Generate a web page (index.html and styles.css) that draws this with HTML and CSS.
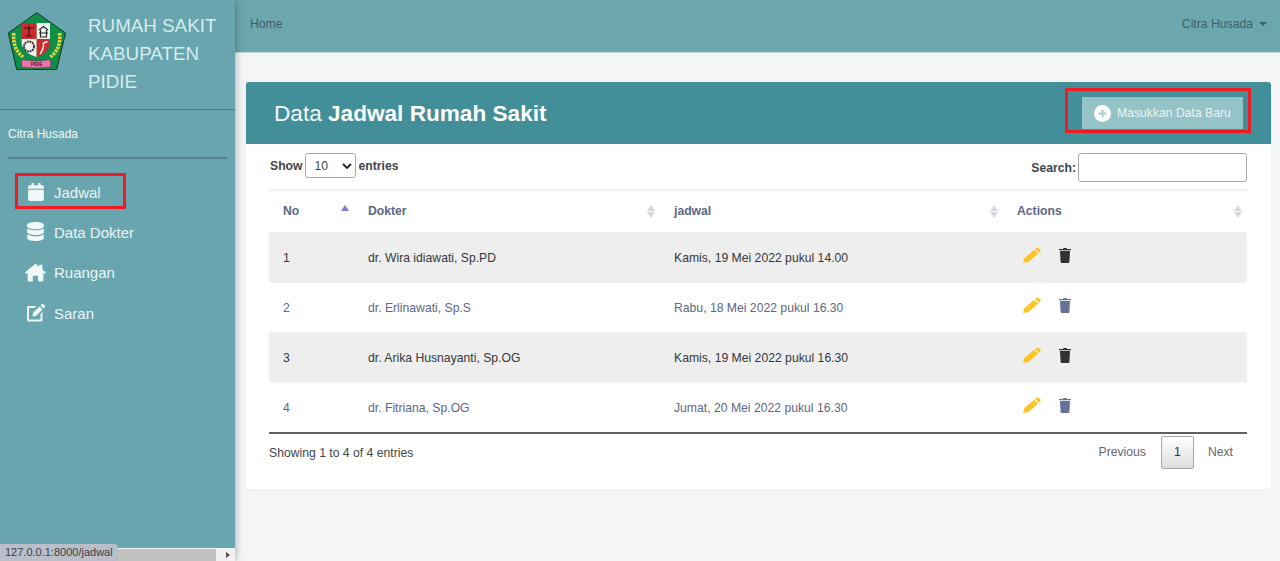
FILE: index.html
```html
<!DOCTYPE html>
<html>
<head>
<meta charset="utf-8">
<title>Data Jadwal Rumah Sakit</title>
<link rel="stylesheet" href="styles.css">
</head>
<body>
<svg class="icon-defs" width="0" height="0">
  <symbol id="i-calendar" viewBox="0 0 448 512"><path d="M12 192h424c6.6 0 12 5.4 12 12v260c0 26.5-21.5 48-48 48H48c-26.5 0-48-21.5-48-48V204c0-6.6 5.4-12 12-12zm436-44v-36c0-26.5-21.5-48-48-48h-48V12c0-6.6-5.4-12-12-12h-40c-6.6 0-12 5.4-12 12v52H160V12c0-6.6-5.4-12-12-12h-40c-6.6 0-12 5.4-12 12v52H48C21.5 64 0 85.5 0 112v36c0 6.6 5.4 12 12 12h424c6.6 0 12-5.4 12-12z"/></symbol>
  <symbol id="i-database" viewBox="0 0 448 512"><path d="M448 73.143v45.714C448 159.143 347.667 192 224 192S0 159.143 0 118.857V73.143C0 32.857 100.333 0 224 0s224 32.857 224 73.143zM448 176v102.857C448 319.143 347.667 352 224 352S0 319.143 0 278.857V176c48.125 33.143 136.208 48.572 224 48.572S399.874 209.143 448 176zm0 160v102.857C448 479.143 347.667 512 224 512S0 479.143 0 438.857V336c48.125 33.143 136.208 48.572 224 48.572S399.874 369.143 448 336z"/></symbol>
  <symbol id="i-home" viewBox="0 0 20 17"><path d="M10 0L13.500 3V1H16.500V5.600L20 8.600L18.800 10L17.500 9V16Q17.500 17 16.500 17H12.500V11.500H7.500V17H3.500Q2.500 17 2.500 16V9L1.200 10L0 8.600Z"/></symbol>
  <symbol id="i-edit" viewBox="0 0 19 19"><path d="M2.500 3H10.500L8.500 5H3V16.500H14.500V11L16.500 9V17Q16.500 18.500 15 18.500H2.500Q1 18.500 1 17V4.500Q1 3 2.500 3Z"/><path d="M7 10L13.500 3.500L16.500 6.500L10 13L6.500 13.500Z"/><path d="M14.500 2.500L15.800 1.200Q16.600 .6 17.400 1.200L18.800 2.600Q19.300 3.400 18.700 4.200L17.500 5.500Z"/></symbol>
  <symbol id="i-pencil" viewBox="0 0 18 16"><path d="M0 16L1.300 11.300L11 2.800L15.200 6.500L5.400 15Z"/><path d="M12 2L13.200 .8Q14.300 0 15.400 .8L17.400 2.600Q18 3.500 17.200 4.500L16 5.700Z"/></symbol>
  <symbol id="i-trash" viewBox="0 0 12 16"><path d="M0 2H4L4.500 1H7.500L8 2H12V3.200H0Z"/><path d="M1 4H11L10.400 15Q10.300 16 9.400 16H2.600Q1.700 16 1.600 15Z"/></symbol>
  <symbol id="i-plus" viewBox="0 0 17 17"><circle cx="8.500" cy="8.500" r="8.500" fill="#fff"/><path d="M8.500 4.500V12.500M4.500 8.500H12.500" stroke="#a9cfd2" stroke-width="2" fill="none"/></symbol>
</svg>

<div class="wrapper">
  <aside class="sidebar">
    <div class="brand">
      <svg class="brand-logo" viewBox="0 0 58 58">
        <polygon points="28.700,.7 57.500,21 48.700,57.500 8.700,57.500 .3,21" fill="#0c8f47" stroke="#10342a"/>
        <path d="M6 21 Q4 36 15 45 M51.500 21 Q53.500 36 42.500 45" fill="none" stroke="#e6d43c" stroke-width="3.500" stroke-dasharray="2.500 1"/>
        <path d="M13.700 11 H28.700 V27 H13.700 Z" fill="#cf2a2e"/>
        <path d="M28.700 11 H42 V27 H28.700 Z" fill="#f2f2ee"/>
        <path d="M13.700 27 H28.700 V45 Q17 42 13.700 33 Z" fill="#f2f2ee"/>
        <path d="M28.700 27 H42 V33 Q39 42 28.700 45 Z" fill="#cf2a2e"/>
        <path d="M16 16 H26 M21 13.500 V24 M17.500 24 H24.500" stroke="#2a1a1a" stroke-width="1.200" fill="none"/>
        <path d="M31 18 L35.500 14.500 L40 18 M32.500 18 V25 H38.500 V18 M31 21 H40" stroke="#2b2b2b" stroke-width="1.200" fill="none"/>
        <circle cx="21" cy="34.500" r="5" fill="#f2f2ee" stroke="#3c3c3c" stroke-width="2" stroke-dasharray="2 .6"/>
        <path d="M32 42 Q36 37 35.500 31 L39.500 29.500" stroke="#f2f2ee" stroke-width="1.500" fill="none"/>
        <path d="M14 47.500 Q28.700 50.500 42 47.500 L43 55 Q28.700 57 13.500 55 Z" fill="#ea74ac" stroke="#7d2a55" stroke-width=".6"/>
        <text class="logo-text" x="28.700" y="54" text-anchor="middle">PIDIE</text>
      </svg>
      <div class="brand-text">RUMAH SAKIT KABUPATEN PIDIE</div>
    </div>
    <div class="user-panel">Citra Husada</div>
    <ul class="nav">
      <li class="nav-active"><svg class="nav-icon ic-cal"><use href="#i-calendar"/></svg>Jadwal</li>
      <li><svg class="nav-icon ic-db"><use href="#i-database"/></svg>Data Dokter</li>
      <li><svg class="nav-icon ic-home"><use href="#i-home"/></svg>Ruangan</li>
      <li><svg class="nav-icon ic-edit"><use href="#i-edit"/></svg>Saran</li>
    </ul>
    <div class="side-scroll">
      <span class="side-thumb"></span>
      <span class="side-arrow"></span>
    </div>
  </aside>

  <div class="main">
    <nav class="topbar">
      <span>Home</span>
      <span class="top-user">Citra Husada<i class="caret"></i></span>
    </nav>
    <div class="content">
      <section class="card">
        <header class="card-head">
          <h1>Data <b>Jadwal Rumah Sakit</b></h1>
          <div class="btn-mark">
            <a class="btn-new"><svg class="btn-icon"><use href="#i-plus"/></svg>Masukkan Data Baru</a>
          </div>
        </header>
        <div class="card-body">
          <div class="dt-top">
            <label class="dt-len">Show <span class="fake-select">10<svg viewBox="0 0 10 6"><path d="M1 1l4 4 4-4" fill="none" stroke="#222" stroke-width="1.800"/></svg></span> entries</label>
            <label class="dt-search">Search: <span class="fake-input"></span></label>
          </div>
          <table class="dt">
            <colgroup><col class="c1"><col class="c2"><col class="c3"><col class="c4"></colgroup>
            <thead>
              <tr>
                <th class="sort-asc">No</th>
                <th>Dokter</th>
                <th>jadwal</th>
                <th>Actions</th>
              </tr>
            </thead>
            <tbody>
              <tr class="odd">
                <td>1</td><td>dr. Wira idiawati, Sp.PD</td><td>Kamis, 19 Mei 2022 pukul 14.00</td>
                <td><span class="acts"><svg class="a-edit"><use href="#i-pencil"/></svg><svg class="a-del"><use href="#i-trash"/></svg></span></td>
              </tr>
              <tr>
                <td>2</td><td>dr. Erlinawati, Sp.S</td><td>Rabu, 18 Mei 2022 pukul 16.30</td>
                <td><span class="acts"><svg class="a-edit"><use href="#i-pencil"/></svg><svg class="a-del"><use href="#i-trash"/></svg></span></td>
              </tr>
              <tr class="odd">
                <td>3</td><td>dr. Arika Husnayanti, Sp.OG</td><td>Kamis, 19 Mei 2022 pukul 16.30</td>
                <td><span class="acts"><svg class="a-edit"><use href="#i-pencil"/></svg><svg class="a-del"><use href="#i-trash"/></svg></span></td>
              </tr>
              <tr>
                <td>4</td><td>dr. Fitriana, Sp.OG</td><td>Jumat, 20 Mei 2022 pukul 16.30</td>
                <td><span class="acts"><svg class="a-edit"><use href="#i-pencil"/></svg><svg class="a-del"><use href="#i-trash"/></svg></span></td>
              </tr>
            </tbody>
          </table>
          <div class="dt-foot">
            <span class="dt-info">Showing 1 to 4 of 4 entries</span>
            <span class="pager"><a>Previous</a><a class="page-on">1</a><a>Next</a></span>
          </div>
        </div>
      </section>
    </div>
  </div>
</div>
<div class="status-bubble">127.0.0.1:8000/jadwal</div>
</body>
</html>
```
FILE: styles.css
```css
* {
  box-sizing: border-box;
}

html, body {
  height: 100%;
}

body {
  margin: 0;
  overflow: hidden;
  font-family: "Liberation Sans", Arial, sans-serif;
  font-size: 12.200px;
  color: #212529;
  background-color: #f4f5f7;
}

.icon-defs {
  position: absolute;
}

.wrapper {
  display: flex;
  height: 100%;
}

/* sidebar */
.sidebar {
  position: relative;
  flex: 0 0 235px;
  background-color: #69a5ae;
  box-shadow: 0 0 8px rgba(0, 0, 0, .35);
  z-index: 2;
}

.brand {
  display: flex;
  height: 110px;
  padding: 12px 0 0 8px;
  border-bottom: 1px solid #4f7a82;
}

.brand-logo {
  flex: 0 0 58px;
  width: 58px;
  height: 58px;
}

.logo-text {
  font-size: 4.500px;
  font-weight: bold;
  fill: #5a1238;
}

.brand-text {
  width: 140px;
  margin: .4px 0 0 22px;
  font-size: 18.800px;
  line-height: 28px;
  color: #d3ecef;
}

.user-panel {
  height: 49px;
  width: 219px;
  margin: 0 8px;
  padding-top: 17px;
  font-size: 12px;
  color: #f2f8f9;
  border-bottom: 2px solid #55848d;
}

.nav {
  list-style: none;
  margin: 13px 0 0;
  padding: 0;
}

.nav li {
  position: relative;
  display: flex;
  align-items: center;
  height: 40.400px;
  padding-left: 54px;
  font-size: 15px;
  color: #e9f4f5;
}

.nav-icon {
  position: absolute;
  fill: #f1f8f9;
}

.ic-cal {
  left: 28px;
  top: 11px;
  width: 16px;
  height: 18px;
}

.ic-db {
  left: 27px;
  top: 10px;
  width: 17px;
  height: 19px;
}

.ic-home {
  left: 25px;
  top: 10px;
  width: 21px;
  height: 19px;
}

.ic-edit {
  left: 26px;
  top: 10px;
  width: 19px;
  height: 19px;
}

.nav-active::after {
  content: "";
  position: absolute;
  left: 15px;
  top: 1px;
  width: 105px;
  height: 30px;
  border: 3px solid #ed1c24;
}

.side-scroll {
  position: absolute;
  left: 0;
  right: 0;
  bottom: 0;
  height: 13px;
  background-color: #f1f1f1;
}

.side-thumb {
  position: absolute;
  left: 0;
  right: 19px;
  top: 1px;
  bottom: 0;
  background-color: #c1c1c1;
}

.side-arrow {
  position: absolute;
  right: 5px;
  top: 4px;
  border-left: 4px solid #505050;
  border-top: 3.500px solid transparent;
  border-bottom: 3.500px solid transparent;
}

.status-bubble {
  position: fixed;
  left: 0;
  bottom: 0;
  width: 118px;
  height: 17px;
  padding: 2px 0 0 5px;
  font-size: 11px;
  color: #3c3f46;
  background-color: #b9bec9;
  border-top-right-radius: 4px;
  z-index: 5;
}

/* main column */
.main {
  flex: 1;
  min-width: 0;
}

.topbar {
  display: flex;
  justify-content: space-between;
  align-items: center;
  height: 53px;
  padding: 0 13px 5px 15px;
  color: #3f5f66;
  background-color: #6ca7af;
  border-bottom: 1px solid #c3d9dc;
}

.top-user {
  display: flex;
  align-items: center;
}

.caret {
  margin-left: 6px;
  border-top: 4px solid #3f5f66;
  border-left: 4px solid transparent;
  border-right: 4px solid transparent;
}

.content {
  padding: 29px 9px 0 11px;
}

.card {
  height: 407px;
  background-color: #fff;
  border-radius: 3px;
  box-shadow: 0 0 2px rgba(0, 0, 0, .07);
}

.card-head {
  display: flex;
  justify-content: space-between;
  align-items: center;
  height: 62px;
  padding: 0 28px;
  background-color: #438f99;
  border-radius: 3px 3px 0 0;
}

.card-head h1 {
  margin: 2px 0 0;
  font-size: 22.600px;
  font-weight: normal;
  color: #f1f8f9;
}

.card-head b {
  color: #fff;
}

.btn-mark {
  position: relative;
}

.btn-mark::after {
  content: "";
  position: absolute;
  left: -17px;
  right: -8px;
  top: -9px;
  bottom: -4px;
  border: 3px solid #ed1c24;
}

.btn-new {
  display: flex;
  align-items: center;
  width: 161px;
  height: 32px;
  padding-left: 12px;
  color: #e9f3f4;
  background-color: #95c4c8;
  border-radius: 1px;
}

.btn-icon {
  width: 17px;
  height: 17px;
  margin-right: 6px;
}

.card-body {
  padding: 9px 24px 0 23px;
}

.dt-top {
  display: flex;
  justify-content: space-between;
  height: 38px;
  border-bottom: 2px solid #f0f1f2;
}

.dt-len {
  display: flex;
  align-items: center;
  align-self: flex-start;
  height: 25px;
  gap: 3px;
  padding-left: 1px;
  font-weight: bold;
  color: #41464b;
}

.fake-select {
  display: flex;
  align-items: center;
  justify-content: space-between;
  width: 51px;
  height: 25px;
  margin-left: -1px;
  padding: 0 3px 0 9px;
  font-weight: normal;
  border: 1px solid #aaa;
  border-radius: 3px;
  background-color: #fff;
}

.fake-select svg {
  width: 10px;
  height: 6px;
}

.dt-search {
  display: flex;
  align-items: center;
  align-self: flex-start;
  height: 29px;
  gap: 2px;
  font-weight: bold;
  color: #41464b;
}

.fake-input {
  width: 169px;
  height: 29px;
  background-color: #fff;
  border: 1px solid #aaa;
  border-radius: 3px;
}

table.dt {
  width: 100%;
  table-layout: fixed;
  border-collapse: collapse;
}

.c1 { width: 85px; }
.c2 { width: 306px; }
.c3 { width: 343px; }
.c4 { width: 244px; }

.dt th {
  position: relative;
  height: 41px;
  padding: 0 14px 1px;
  text-align: left;
  font-weight: bold;
  color: #5e6784;
}

/* the pair of sort arrows on each header */
.dt th::before,
.dt th::after {
  content: "";
  position: absolute;
  right: 5px;
  border-left: 4px solid transparent;
  border-right: 4px solid transparent;
}

.dt th::before {
  top: 14px;
  border-bottom: 6px solid #d5d8dc;
}

.dt th::after {
  top: 21px;
  border-top: 6px solid #d5d8dc;
}

.dt th.sort-asc::before {
  border-bottom-color: #7c7fc9;
}

.dt th.sort-asc::after {
  display: none;
}

.dt td {
  height: 50px;
  padding: 1px 14px 0;
  color: #5e6784;
  border-top: 1px solid #f2f2f2;
}

.dt tr.odd td {
  color: #34383c;
  background-color: #eeeeee;
}

.dt tbody tr:last-child td {
  height: 51px;
  border-bottom: 2px solid #5f6265;
}

.acts {
  display: flex;
  align-items: center;
  gap: 18px;
  padding: 0 0 6px 6px;
}

.a-edit {
  width: 18px;
  height: 16px;
  fill: #fcc425;
}

.a-del {
  width: 12px;
  height: 16px;
  fill: #667394;
}

.odd .a-del {
  fill: #2f3336;
}

.dt-foot {
  display: flex;
  justify-content: space-between;
  align-items: center;
  padding-top: 2px;
}

.dt-info {
  color: #41464b;
}

.pager {
  display: flex;
  align-items: center;
  padding-right: 14px;
}

.pager a {
  line-height: 31px;
  color: #666;
}

.pager .page-on {
  width: 33px;
  margin: 0 14px 0 15px;
  text-align: center;
  color: #333;
  border: 1px solid #aaa;
  border-radius: 2px;
  background: linear-gradient(#fff, #ddd);
}
```
